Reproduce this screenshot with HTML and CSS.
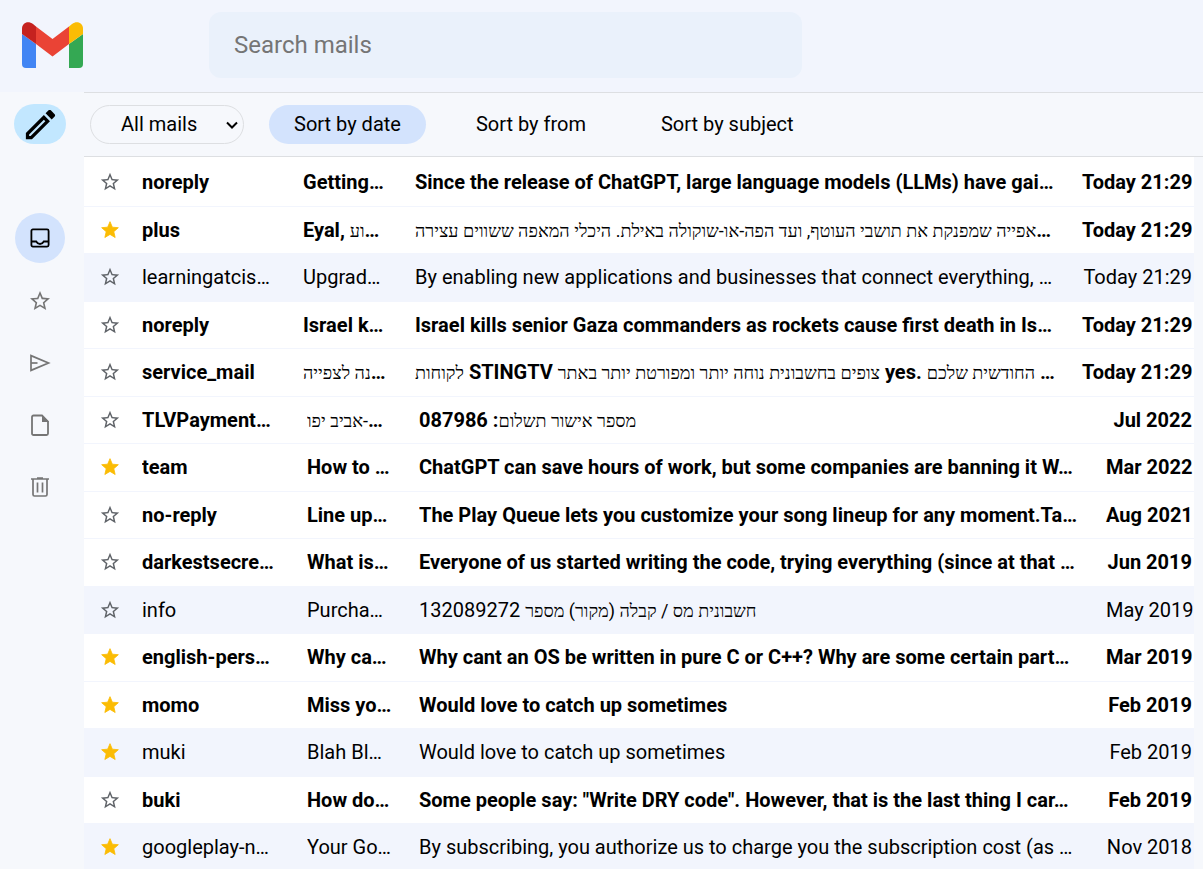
FILE: index.html
```html
<!DOCTYPE html>
<html lang="en">
<head>
<meta charset="utf-8">
<title>Mail</title>
<link rel="stylesheet" href="styles.css">
</head>
<body>
<svg class="sprite" aria-hidden="true">
  <symbol id="star-off" viewBox="0 0 24 24"><path d="M22 9.240l-7.190-.62L12 2 9.190 8.630 2 9.240l5.460 4.730L5.820 21 12 17.270 18.180 21l-1.630-7.030L22 9.240zM12 15.400l-3.760 2.270 1-4.280-3.320-2.880 4.380-.38L12 6.100l1.710 4.040 4.380.38-3.320 2.880 1 4.280L12 15.400z"/></symbol>
  <symbol id="star-on" viewBox="0 0 24 24"><path stroke="currentColor" stroke-linejoin="round" d="M12 17.270L18.180 21l-1.640-7.030L22 9.240l-7.190-.61L12 2 9.190 8.630 2 9.240l5.460 4.730L5.820 21z"/></symbol>
</svg>
<header class="app-header">
  <svg class="logo" viewBox="0 0 61 46" aria-label="Mail logo" role="img">
    <path fill="#4285f4" d="M0 12v30a4 4 0 0 0 4 4h10V22z"/>
    <path fill="#34a853" d="M61 12v30a4 4 0 0 1-4 4H47V22z"/>
    <path fill="#ea4335" d="M14 4.500L30.500 17 47 4.500V22L30.500 34.500 14 22z"/>
    <path fill="#c5221f" d="M0 12V6.500C0 1 6-2 11 2l3 2.500V22z"/>
    <path fill="#fbbc04" d="M61 12V6.500C61 1 55-2 50 2l-3 2.500V22z"/>
  </svg>
  <input class="search" type="search" placeholder="Search mails" aria-label="Search mails">
</header>
<div class="app-body">
  <aside class="sidebar">
    <button class="compose" aria-label="Compose"><svg viewBox="0 0 24 24"><path fill-rule="evenodd" d="M14.060 9.020l.92.92L5.920 19H5v-.92zM17.660 3c-.25 0-.51.1-.7.290l-1.830 1.830 3.750 3.750 1.830-1.830c.39-.39.39-1.020 0-1.410l-2.340-2.340c-.2-.2-.45-.29-.71-.29zm-3.600 3.190L3 17.250V21h3.750L17.810 9.940l-3.750-3.750z"/></svg></button>
    <nav class="folders">
      <a class="folder folder-active" href="#inbox" aria-label="Inbox"><svg viewBox="0 0 24 24" fill="none" stroke="#000" stroke-width="1.800"><rect x="3.400" y="3.400" width="17.200" height="17.200" rx="1.500"/><path d="M3.400 15.500h4.800c1 1.800 2.300 2.500 3.800 2.500s2.800-.7 3.800-2.500h4.800"/></svg></a>
      <a class="folder" href="#starred" aria-label="Starred"><svg><use href="#star-off"/></svg></a>
      <a class="folder" href="#sent" aria-label="Sent"><svg viewBox="0 0 24 24" fill="none" stroke="currentColor" stroke-width="1.700"><path d="M3 4.600v14.800L20.500 12z"/><path d="M3 12h6.500"/></svg></a>
      <a class="folder" href="#drafts" aria-label="Drafts"><svg viewBox="0 0 24 24"><path fill="none" stroke="currentColor" stroke-width="1.800" d="M5.500 2.500H14l6 6v12a1.500 1.500 0 0 1-1.500 1.500h-13A1.500 1.500 0 0 1 4 20.500V4a1.500 1.500 0 0 1 1.500-1.500z"/><path d="M14 2v7h7z"/></svg></a>
      <a class="folder" href="#trash" aria-label="Trash"><svg viewBox="0 0 24 24" fill="none" stroke="currentColor" stroke-width="1.700"><path d="M3 4h18M9 3h6M5 4v15.500a1.500 1.500 0 0 0 1.500 1.500h11a1.500 1.500 0 0 0 1.500-1.500V4M9.500 7.500v10M14.500 7.500v10"/></svg></a>
    </nav>
  </aside>
  <main class="content">
    <div class="toolbar">
      <label class="filter">
        <select class="filter-select" aria-label="Filter mails"><option>All mails</option><option>Read</option><option>Unread</option></select>
        <svg class="filter-arrow" viewBox="0 0 12 8" aria-hidden="true"><path d="M1 1.500l5 5 5-5"/></svg>
      </label>
      <button class="sort sort-active">Sort by date</button>
      <button class="sort">Sort by from</button>
      <button class="sort">Sort by subject</button>
    </div>
    <ul class="mails">
      <li class="mail mail-today"><button class="star" aria-label="Star"><svg><use href="#star-off"/></svg></button><span class="from">noreply</span><span class="subject">Getting…</span><span class="text">Since the release of ChatGPT, large language models (LLMs) have gai…</span><time class="date">Today 21:29</time></li>
      <li class="mail mail-today"><button class="star star-on" aria-label="Star"><svg><use href="#star-on"/></svg></button><span class="from">plus</span><span class="subject">Eyal, <span class="he" lang="he">וע</span>…</span><span class="text"><span class="he" lang="he">אפייה שמפנקת את תושבי העוטף, ועד הפה-או-שוקולה באילת. היכלי המאפה ששווים עצירה</span>…</span><time class="date">Today 21:29</time></li>
      <li class="mail mail-today mail-read"><button class="star" aria-label="Star"><svg><use href="#star-off"/></svg></button><span class="from">learningatcis…</span><span class="subject">Upgrad…</span><span class="text">By enabling new applications and businesses that connect everything, …</span><time class="date">Today 21:29</time></li>
      <li class="mail mail-today"><button class="star" aria-label="Star"><svg><use href="#star-off"/></svg></button><span class="from">noreply</span><span class="subject">Israel k…</span><span class="text">Israel kills senior Gaza commanders as rockets cause first death in Is…</span><time class="date">Today 21:29</time></li>
      <li class="mail mail-today"><button class="star" aria-label="Star"><svg><use href="#star-off"/></svg></button><span class="from">service_mail</span><span class="subject"><span class="he" lang="he">נה לצפייה</span>…</span><span class="text"><span class="he" lang="he">לקוחות</span> STINGTV <span class="he" lang="he">צופים בחשבונית נוחה יותר ומפורטת יותר באתר</span> yes. <span class="he" lang="he">החודשית שלכם</span> …</span><time class="date">Today 21:29</time></li>
      <li class="mail"><button class="star" aria-label="Star"><svg><use href="#star-off"/></svg></button><span class="from">TLVPayment…</span><span class="subject"><span class="he" lang="he">&rlm;-אביב יפו</span>…</span><span class="text"><span class="he" lang="he">מספר אישור תשלום</span>: 087986</span><time class="date">Jul 2022</time></li>
      <li class="mail"><button class="star star-on" aria-label="Star"><svg><use href="#star-on"/></svg></button><span class="from">team</span><span class="subject">How to …</span><span class="text">ChatGPT can save hours of work, but some companies are banning it W…</span><time class="date">Mar 2022</time></li>
      <li class="mail"><button class="star" aria-label="Star"><svg><use href="#star-off"/></svg></button><span class="from">no-reply</span><span class="subject">Line up…</span><span class="text">The Play Queue lets you customize your song lineup for any moment.Ta…</span><time class="date">Aug 2021</time></li>
      <li class="mail"><button class="star" aria-label="Star"><svg><use href="#star-off"/></svg></button><span class="from">darkestsecre…</span><span class="subject">What is…</span><span class="text">Everyone of us started writing the code, trying everything (since at that …</span><time class="date">Jun 2019</time></li>
      <li class="mail mail-read"><button class="star" aria-label="Star"><svg><use href="#star-off"/></svg></button><span class="from">info</span><span class="subject">Purcha…</span><span class="text"><span class="he" lang="he">חשבונית מס / קבלה (מקור) מספר</span> 132089272</span><time class="date">May 2019</time></li>
      <li class="mail"><button class="star star-on" aria-label="Star"><svg><use href="#star-on"/></svg></button><span class="from">english-pers…</span><span class="subject">Why ca…</span><span class="text">Why cant an OS be written in pure C or C++? Why are some certain part…</span><time class="date">Mar 2019</time></li>
      <li class="mail"><button class="star star-on" aria-label="Star"><svg><use href="#star-on"/></svg></button><span class="from">momo</span><span class="subject">Miss yo…</span><span class="text">Would love to catch up sometimes</span><time class="date">Feb 2019</time></li>
      <li class="mail mail-read"><button class="star star-on" aria-label="Star"><svg><use href="#star-on"/></svg></button><span class="from">muki</span><span class="subject">Blah Bl…</span><span class="text">Would love to catch up sometimes</span><time class="date">Feb 2019</time></li>
      <li class="mail"><button class="star" aria-label="Star"><svg><use href="#star-off"/></svg></button><span class="from">buki</span><span class="subject">How do…</span><span class="text">Some people say: "Write DRY code". However, that is the last thing I car…</span><time class="date">Feb 2019</time></li>
      <li class="mail mail-read"><button class="star star-on" aria-label="Star"><svg><use href="#star-on"/></svg></button><span class="from">googleplay-n…</span><span class="subject">Your Go…</span><span class="text">By subscribing, you authorize us to charge you the subscription cost (as …</span><time class="date">Nov 2018</time></li>
    </ul>
  </main>
</div>
</body>
</html>
```
FILE: styles.css
```css
* { box-sizing: border-box; }
body {
  margin: 0;
  height: 100vh;
  display: flex;
  flex-direction: column;
  background: #f6f8fc;
  color: #000;
  font-family: Roboto, "Liberation Serif", serif;
  font-size: 20px;
}
button, input, select { font: inherit; color: inherit; border: 0; background: none; }
.sprite { display: none; }
.app-header {
  display: flex;
  align-items: center;
  gap: 126px;
  padding: 12px 22px 14px;
  background: #f2f5fd;
}
.logo { width: 61px; height: 46px; flex: none; }
.search {
  flex: 0 1 593px;
  min-width: 0;
  height: 66px;
  padding: 0 25px;
  border-radius: 12px;
  background: #eaf1fb;
  font-size: 24px;
}
.search::placeholder { color: #757575; }
.app-body { flex: 1; min-height: 0; display: flex; }
.sidebar {
  width: 84px;
  flex: none;
  display: flex;
  flex-direction: column;
  align-items: center;
  gap: 69px;
  padding: 12px 4px 0 0;
}
.compose {
  display: grid;
  place-items: center;
  width: 52px;
  height: 40px;
  padding: 0;
  border-radius: 20px;
  background: #c2e7ff;
}
.compose svg { width: 39px; height: 39px; }
.folders { display: flex; flex-direction: column; gap: 12px; }
.folder {
  display: grid;
  place-items: center;
  width: 50px;
  height: 50px;
  border-radius: 50%;
  color: #757575;
  fill: #757575;
}
.folder-active { margin-bottom: 1px; background: #d3e3fd; }
.folder svg { width: 24px; height: 24px; }
.content { flex: 1; min-width: 0; display: flex; flex-direction: column; }
.toolbar {
  display: flex;
  align-items: center;
  gap: 25px;
  padding: 12px 6px;
  border-top: 1px solid #dddfe2;
  border-bottom: 1px solid #dddfe2;
}
.filter { display: grid; align-items: center; width: 154px; }
.filter-select {
  grid-area: 1 / 1;
  width: 100%;
  height: 39px;
  padding: 0 24px 2px 30px;
  border: 1px solid #dddfe2;
  border-radius: 20px;
  appearance: none;
}
.filter-arrow {
  grid-area: 1 / 1;
  justify-self: end;
  width: 12px;
  height: 8px;
  margin-right: 6px;
  fill: none;
  stroke: #000;
  stroke-width: 2;
  pointer-events: none;
}
.sort { height: 39px; padding: 0 25px 2px; border-radius: 20px; }
.sort-active { background: #d3e3fd; }
.mails {
  flex: 1;
  margin: 0 9px 0 0;
  padding: 2px 0 0;
  background: #fff;
  list-style: none;
  overflow-y: auto;
  scrollbar-width: none;
}
.mail {
  height: 47px;
  display: grid;
  grid-template-columns: 20px 140px 87px minmax(0, 1fr) 86px;
  column-gap: 22px;
  align-items: center;
  padding: 0 2px 0 16px;
  border-bottom: 1px solid #f2f5fd;
  font-weight: 700;
  white-space: nowrap;
}
.mail { grid-template-columns: 20px 143px 90px minmax(0, 1fr) 86px; }
.mail-today { grid-template-columns: 20px 139px 90px minmax(0, 1fr) 110px; }
.mail:nth-child(odd) { height: 48px; padding-bottom: 1px; }
.mail-read { background: #f2f5fd; font-weight: 400; }
.star { display: grid; place-items: center; justify-self: center; width: 22px; height: 22px; padding: 0; color: #5f6368; fill: currentColor; }
.star svg { width: 22px; height: 22px; }
.star-on { color: #fbbc04; }
.star-on svg { width: 20px; height: 20px; }
.from, .subject, .text { overflow: hidden; text-overflow: ellipsis; }
.he { font-weight: 400; font-size: 18px; }
.date { text-align: right; }
```
